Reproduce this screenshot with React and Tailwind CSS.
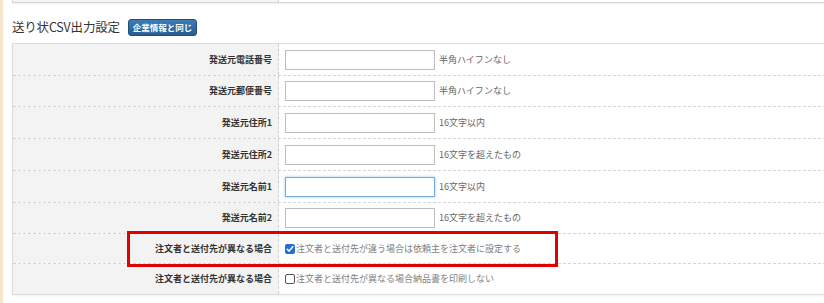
import React from "react";

const rows = [
  { label: "発送元電話番号", hint: "半角ハイフンなし", h: "h-[32px]" },
  { label: "発送元郵便番号", hint: "半角ハイフンなし", h: "h-[31px]" },
  { label: "発送元住所1", hint: "16文字以内", h: "h-[32px]" },
  { label: "発送元住所2", hint: "16文字を超えたもの", h: "h-[32px]" },
  { label: "発送元名前1", hint: "16文字以内", h: "h-[32px]", focus: true },
  { label: "発送元名前2", hint: "16文字を超えたもの", h: "h-[31px]" },
];

function CheckBox({ checked }) {
  if (checked) {
    return (
      <span className="inline-flex w-[10px] h-[10px] rounded-[2px] bg-[#1f6fd6] items-center justify-center shrink-0">
        <svg width="8" height="8" viewBox="0 0 8 8">
          <path d="M1.2 4.2 L3.2 6.1 L6.9 1.6" fill="none" stroke="#fff" strokeWidth="1.5" strokeLinecap="round" strokeLinejoin="round" />
        </svg>
      </span>
    );
  }
  return <span className="inline-block w-[10px] h-[10px] rounded-[2px] border border-[#555] bg-white shrink-0" />;
}

function Label({ children }) {
  return (
    <div className="w-[266px] shrink-0 h-full bg-[#f3f3f3] border-r border-dashed border-[#cfcfcf] flex items-center justify-end pr-[6px] font-bold text-[#333] text-[9px]">
      {children}
    </div>
  );
}

export default function App() {
  return (
    <div
      className="w-[824px] h-[303px] overflow-hidden bg-white flex"
      style={{ fontFamily: '"Noto Sans CJK JP", "Noto Sans", sans-serif' }}
    >
      <div className="w-[3px] h-full bg-[#f6e7cc] shrink-0" />
      <div className="ml-[9px] w-[830px] shrink-0 relative">
        {/* top panel remnant */}
        <div className="h-[3px] flex border-l border-b border-[#d6d6d6] shadow-[0_1px_1px_rgba(0,0,0,0.06)]">
          <div className="w-[266px] h-full bg-[#f5f5f5] border-r border-dashed border-[#cfcfcf]" />
          <div className="flex-1 bg-white" />
        </div>

        {/* heading */}
        <div className="mt-[12px] h-[24px] flex items-center gap-[8px]">
          <span className="text-[12.5px] text-[#333] leading-none tracking-[-0.2px]">送り状CSV出力設定</span>
          <span className="h-[17px] px-[4px] flex items-center rounded-[3px] border border-[#1f4f7d] bg-gradient-to-b from-[#3d7cb8] to-[#255d90] text-white text-[8.5px] font-bold leading-none">
            企業情報と同じ
          </span>
        </div>

        {/* table */}
        <div className="mt-[4px] border border-[#dcdcdc] shadow-[0_1px_2px_rgba(0,0,0,0.06)]">
          {rows.map((r, i) => (
            <div key={i} className={`${r.h} flex border-b border-dashed border-[#d4d4d4]`}>
              <Label>{r.label}</Label>
              <div className="flex items-center pl-[6px]">
                <div
                  className={
                    r.focus
                      ? "w-[150px] h-[20px] bg-white border border-[#74a9dc] shadow-[0_0_3px_rgba(110,170,230,0.6)]"
                      : "w-[150px] h-[20px] bg-white border border-[#bdbdbd]"
                  }
                />
                <span className="ml-[4px] text-[9px] text-[#666]">{r.hint}</span>
              </div>
            </div>
          ))}
          <div className="h-[30px] flex border-b border-dashed border-[#d4d4d4]">
            <Label>注文者と送付先が異なる場合</Label>
            <div className="flex items-center pl-[6px] gap-[1px]">
              <CheckBox checked />
              <span className="text-[9px] text-[#808080]">注文者と送付先が違う場合は依頼主を注文者に設定する</span>
            </div>
          </div>
          <div className="h-[30px] flex">
            <Label>注文者と送付先が異なる場合</Label>
            <div className="flex items-center pl-[6px] gap-[1px]">
              <CheckBox />
              <span className="text-[9px] text-[#808080]">注文者と送付先が異なる場合納品書を印刷しない</span>
            </div>
          </div>
        </div>

        {/* red highlight overlay */}
        <div className="absolute left-[115px] top-[231px] w-[431px] h-[36px] border-[3px] border-[#e00000] pointer-events-none" />
      </div>
    </div>
  );
}
